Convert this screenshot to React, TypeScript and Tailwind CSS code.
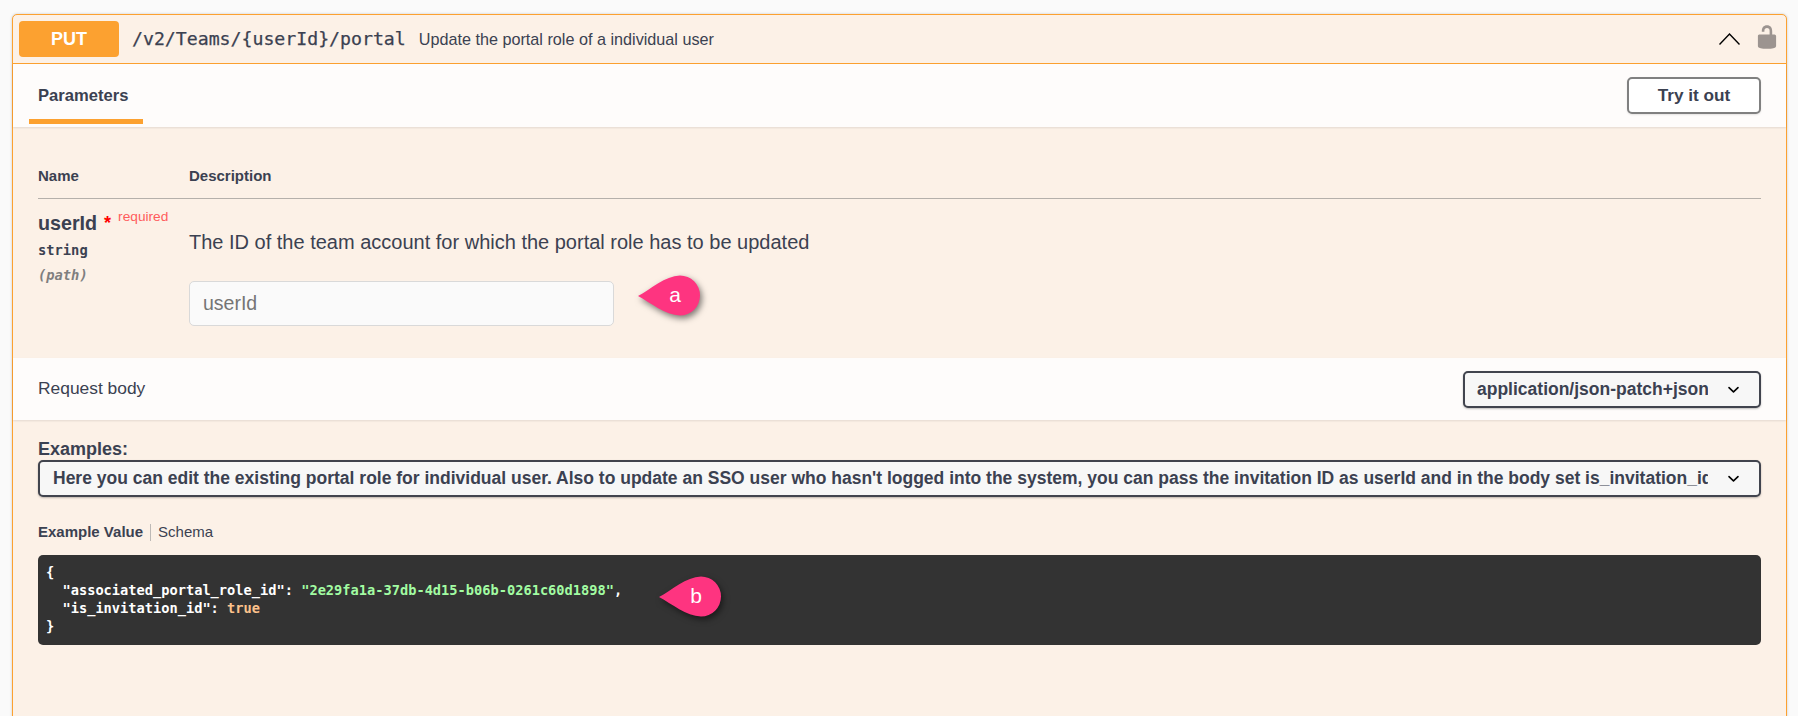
import * as React from "react";

const sans = "font-['Liberation_Sans',Arial,sans-serif]";
const mono = "font-['DejaVu_Sans_Mono',monospace]";

function Chevron() {
  return (
    <svg viewBox="0 0 20 20" className="w-[23px] h-[23px] shrink-0 fill-black">
      <path d="M13.418 7.859a.695.695 0 0 1 .978 0 .68.68 0 0 1 0 .969l-3.908 3.83a.697.697 0 0 1-.979 0l-3.908-3.83a.68.68 0 0 1 0-.969.695.695 0 0 1 .978 0L10 11l3.418-3.141z" />
    </svg>
  );
}

function Callout({ label, className }: { label: string; className: string }) {
  return (
    <div className={`absolute w-[62px] h-[41px] ${className}`}>
      <svg viewBox="0 0 62 41" className="absolute inset-0 w-[62px] h-[41px] overflow-visible drop-shadow-[2px_3px_3px_rgba(0,0,0,0.5)]">
        <path d="M0 21 C 13 14, 27 1, 42 0.5 A 20 20 0 0 1 42 40.5 C 27 40, 13 28, 0 21 Z" fill="#fe3480" />
      </svg>
      <span className={`absolute left-[37px] top-[8px] w-[0px] flex justify-center text-white text-[21px] leading-[24px] ${sans}`}>{label}</span>
    </div>
  );
}

function SelectBox({ children, className }: { children: React.ReactNode; className: string }) {
  return (
    <div className={`flex items-center border-2 border-[#41444e] rounded-[5px] bg-[#f7f7f7] shadow-[0_1px_2px_rgba(0,0,0,0.25)] text-[17.5px] font-bold text-[#3b4151] pr-[14px] ${className}`}>
      <div className="flex-1 min-w-0 overflow-hidden whitespace-nowrap">{children}</div>
      <div className="ml-[14px]">
        <Chevron />
      </div>
    </div>
  );
}

export default function App() {
  return (
    <div className={`h-[716px] overflow-hidden bg-[#fafafa] pl-[12px] pr-[11px] pt-[14px] text-[#3b4151] ${sans}`}>
      <div className="h-[740px] border border-[#fca130] rounded-[5px] bg-[#fcf1e7] shadow-[0_0_3px_rgba(0,0,0,0.19)]">
        {/* summary */}
        <div className="h-[49px] flex items-center border-b border-[#fca130] pl-[6px] pr-[6px]">
          <div className="w-[100px] h-[36px] flex items-center justify-center rounded-[4px] bg-[#fca130] text-white font-bold text-[18px]">PUT</div>
          <span className={`ml-[13px] text-[18.2px] [-webkit-text-stroke:0.25px] ${mono}`}>/v2/Teams/{"{userId}"}/portal</span>
          <span className="ml-[13px] text-[16.2px]">Update the portal role of a individual user</span>
          <svg viewBox="0 0 21 12" className="ml-auto w-[21px] h-[12px] fill-none stroke-black stroke-[1.4]">
            <path d="M0.5 11.5 L10.5 1 L20.5 11.5" />
          </svg>
          <svg viewBox="0 0 20 20" className="ml-[14px] mb-[4px] w-[26px] h-[26px] fill-[#9c9490]">
            <path d="M15.8 8H14V5.6C14 2.703 12.665 1 10 1 7.334 1 6 2.703 6 5.6V6h2v-.801C8 3.754 8.797 3 10 3c1.203 0 2 .754 2 2.199V8H4c-.553 0-1 .646-1 1.199V17c0 .549.428 1.139.951 1.307l1.197.387C5.672 18.861 6.55 19 7.1 19h5.8c.549 0 1.428-.139 1.951-.307l1.196-.387c.524-.167.953-.757.953-1.306V9.199C17 8.646 16.352 8 15.8 8z" />
          </svg>
        </div>

        {/* tab bar */}
        <div className="h-[63px] flex items-center justify-between bg-[#fefcfb] shadow-[0_1px_2px_rgba(0,0,0,0.1)] pr-[25px]">
          <div className="ml-[16px] w-[114px] h-[60px] flex items-center pl-[9px] pt-[9px] border-b-[5px] border-[#fca130] mb-[3px] self-end">
            <span className="text-[16.6px] font-bold">Parameters</span>
          </div>
          <button className="w-[134px] h-[37px] border-2 border-[#808080] rounded-[5px] bg-white text-[17.2px] font-bold text-[#3b4151] shadow-[0_1px_2px_rgba(0,0,0,0.1)]">Try it out</button>
        </div>

        {/* parameters */}
        <div className="h-[231px] px-[25px] pt-[37px]">
          <div className="flex h-[35px] border-b border-[#b5b0ab] text-[15px] font-bold pt-[1px]">
            <div className="w-[151px]">Name</div>
            <div>Description</div>
          </div>
          <div className="flex">
            <div className="w-[151px]">
              <div className="flex items-start h-[36px] pt-[12px]">
                <span className="text-[19.7px] font-bold leading-[24px]">userId</span>
                <span className="ml-[7px] mt-[3px] text-[18px] font-bold text-[#ff0000] leading-[18px]">*</span>
                <span className="ml-[7px] mt-[-2px] text-[13.7px] text-[#ff5c5c] leading-[16px]">required</span>
              </div>
              <div className={`mt-[6px] text-[13.76px] font-bold leading-[18px] ${mono}`}>string</div>
              <div className={`mt-[7px] text-[13.76px] font-bold italic leading-[18px] text-[#7f7f7f] ${mono}`}>(path)</div>
            </div>
            <div className="flex-1">
              <p className="mt-[32px] text-[20px] leading-[22px]">The ID of the team account for which the portal role has to be updated</p>
              <div className="relative mt-[28px]">
                <input
                  placeholder="userId"
                  readOnly
                  className="w-[425px] h-[45px] border border-[#d9d9d9] rounded-[5px] bg-[#fafafa] px-[13px] text-[19.5px] outline-none placeholder:text-[#757575]"
                />
                <Callout label="a" className="left-[449px] top-[-6px]" />
              </div>
            </div>
          </div>
        </div>

        {/* request body */}
        <div className="h-[62px] flex items-center justify-between bg-[#fefcfb] shadow-[0_1px_2px_rgba(0,0,0,0.1)] px-[25px]">
          <span className="text-[17.4px] mb-[2px]">Request body</span>
          <SelectBox className="w-[298px] h-[37px] pl-[12px]">application/json-patch+json</SelectBox>
        </div>

        <div className="px-[25px]">
          <div className="mt-[19px] text-[18px] font-bold leading-[20px]">Examples:</div>
          <SelectBox className="mt-[1px] h-[37px] pl-[13px]">
            Here you can edit the existing portal role for individual user. Also to update an SSO user who hasn't logged into the system, you can pass the invitation ID as userId and in the body set is_invitation_id to true
          </SelectBox>

          <div className="mt-[26px] flex items-center h-[18px] text-[15px]">
            <span className="font-bold">Example Value</span>
            <span className="mx-[7px] h-[17px] border-l border-[#bdb9b6]"></span>
            <span>Schema</span>
          </div>

          <div className="relative mt-[14px] rounded-[5px] bg-[#333333] pl-[8px] pr-[5px] pt-[8px] pb-[10px]">
            <pre className={`text-[13.68px] leading-[18px] font-bold text-white ${mono}`}>
              {"{\n  \"associated_portal_role_id\": "}
              <span className="text-[#a2fca2]">"2e29fa1a-37db-4d15-b06b-0261c60d1898"</span>
              {",\n  \"is_invitation_id\": "}
              <span className="text-[#fcc28c]">true</span>
              {"\n}"}
            </pre>
            <Callout label="b" className="left-[621px] top-[21px]" />
          </div>
        </div>
      </div>
    </div>
  );
}
